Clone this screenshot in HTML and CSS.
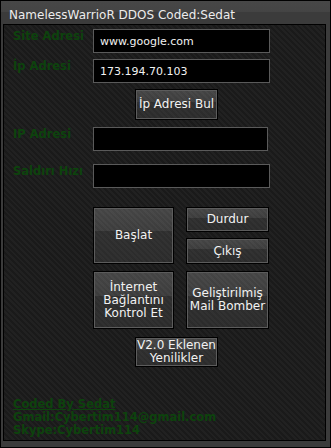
FILE: index.html
```html
<!DOCTYPE html>
<html>
<head>
<meta charset="UTF-8">
<title>NamelessWarrioR DDOS</title>
<link rel="stylesheet" href="styles.css">
</head>
<body>
	<div class="window">
		<div class="titlebar">NamelessWarrioR DDOS Coded:Sedat</div>
		<div class="panel">
			<div class="form">
				<div class="label">Site Adresi</div>
				<input class="field" type="text" value="www.google.com">
				<div class="label row2">İp Adresi</div>
				<input class="field row2" type="text" value="173.194.70.103">
				<div></div>
				<div class="btnrow"><a class="button small">İp Adresi Bul</a></div>
				<div class="label row3">IP Adresi</div>
				<input class="field row3 narrow" type="text" value="">
				<div class="label row4">Saldırı Hızı</div>
				<input class="field row4" type="text" value="">
			</div>
			<div class="actions">
				<a class="button tall" id="start">Başlat</a>
				<a class="button" id="stop">Durdur</a>
				<a class="button" id="exit">Çıkış</a>
				<a class="button big">İnternet<br>Bağlantını<br>Kontrol Et</a>
				<a class="button big">Geliştirilmiş<br>Mail Bomber</a>
			</div>
			<div class="btnrow news"><a class="button small lines">V2.0 Eklenen<br>Yenilikler</a></div>
			<div class="footer">
				<div class="coded">Coded By Sedat</div>
				<div>Gmail:Cybertim114@gmail.com</div>
				<div>Skype:Cybertim114</div>
			</div>
		</div>
	</div>
</body>
</html>
```

FILE: styles.css
```css
		body {
			margin: 0;
			background: #fff;
			font-family: "DejaVu Sans", Verdana, sans-serif;
		}
		.window {
			box-sizing: border-box;
			width: 331px;
			height: 448px;
			border: 1px solid #000;
			background: #3b3b3b;
			padding: 0 4px 6px 2px;
			display: flex;
			flex-direction: column;
		}
		.titlebar {
			height: 23px;
			box-sizing: border-box;
			padding: 7px 0 0 8px;
			margin: 0 -4px 0 -2px;
			font-size: 12px;
			line-height: 14px;
			color: #ececec;
			background: linear-gradient(#474747 0, #444 50%, #3b3b3b 50%, #3b3b3b 100%);
		}
		.panel {
			flex: 1;
			border: 1px solid #000;
			background-color: #1b1b1b;
			background-image: repeating-linear-gradient(45deg, #1a1a1a 0, #1a1a1a 2px, #212121 2px, #212121 4px);
			display: flex;
			flex-direction: column;
		}
		.form {
			display: grid;
			grid-template-columns: 80px 177px;
			padding: 4px 0 0 9px;
			row-gap: 6px;
		}
		.label {
			font-size: 11.5px;
			font-weight: bold;
			line-height: 13px;
			color: #0d430d;
			margin-top: 1px;
			white-space: nowrap;
		}
		.field {
			box-sizing: border-box;
			width: 177px;
			height: 24px;
			margin: 0;
			padding: 0 6px;
			border: 1px solid #5a5a5a;
			background: #000;
			color: #f2f2f2;
			font-family: "DejaVu Sans", Verdana, sans-serif;
			font-size: 11px;
			outline: none;
		}
		.field.narrow {
			width: 175px;
		}
		.row3 {
			margin-top: 1px;
		}
		.row4 {
			margin-top: 7px;
		}
		.label.row3 {
			margin-top: 2px;
		}
		.label.row4 {
			margin-top: 8px;
		}
		.btnrow {
			padding-left: 42px;
		}
		.button {
			box-sizing: border-box;
			display: flex;
			align-items: center;
			justify-content: center;
			text-align: center;
			border: 1px solid #000;
			box-shadow: inset 0 0 0 1px #5c5c5c;
			background:
				repeating-linear-gradient(45deg, rgba(255,255,255,0.02) 0, rgba(255,255,255,0.02) 2px, rgba(0,0,0,0.03) 2px, rgba(0,0,0,0.03) 4px),
				linear-gradient(#474747 0, #3e3e3e 42%, #2f2f2f 42%, #2c2c2c 100%);
			color: #f2f2f2;
			font-size: 12px;
			line-height: 13px;
			cursor: pointer;
			-webkit-user-select: none;
			user-select: none;
		}
		.button.small {
			width: 83px;
			height: 31px;
		}
		.actions {
			display: grid;
			grid-template-columns: 81px 83px;
			grid-template-rows: 25px 26px 59px;
			column-gap: 12px;
			row-gap: 6px;
			margin: 19px 0 0 89px;
		}
		.button.tall {
			grid-row: 1 / span 2;
		}
		.button.big {
			margin-top: 1px;
		}
		.news {
			margin: 8px 0 0 131px;
			padding: 0;
		}
		.button.lines {
			height: 30px;
			line-height: 13px;
		}
		.footer {
			margin-top: auto;
			padding: 0 0 3px 9px;
			font-size: 11.5px;
			font-weight: bold;
			line-height: 13px;
			color: #0d430d;
		}
		.coded {
			text-decoration: underline;
		}
```
